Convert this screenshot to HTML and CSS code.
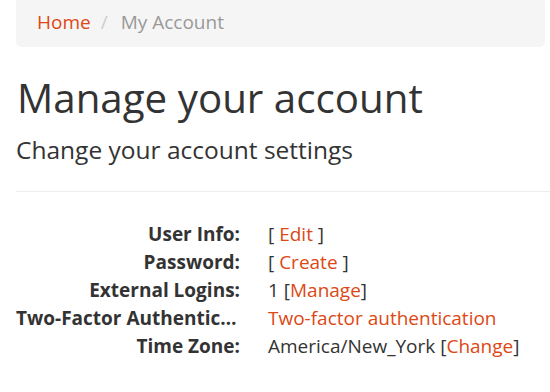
FILE: index.html
```html
<!DOCTYPE html>
<html lang="en">
<head>
    <meta charset="UTF-8">
    <meta name="viewport" content="width=device-width, initial-scale=1.0">
    <title>Manage your account</title>
    <link rel="stylesheet" href="styles.css">
</head>
<body>
    <div class="container">
        <ol class="breadcrumb">
            <li><a href="#">Home</a></li>
            <li class="active">My Account</li>
        </ol>

        <h1 class="page-title">Manage your account</h1>
        <h4 class="page-subtitle">Change your account settings</h4>

        <hr>

        <dl class="dl-horizontal">
            <dt>User Info:</dt>
            <dd>[ <a href="#">Edit</a> ]</dd>

            <dt>Password:</dt>
            <dd>[ <a href="#">Create</a> ]</dd>

            <dt>External Logins:</dt>
            <dd>1 [<a href="#">Manage</a>]</dd>

            <dt>Two-Factor Authentication:</dt>
            <dd><a href="#">Two-factor authentication</a></dd>

            <dt>Time Zone:</dt>
            <dd>America/New_York [<a href="#">Change</a>]</dd>
        </dl>
    </div>
</body>
</html>
```

FILE: styles.css
```css
* {
    margin: 0;
    padding: 0;
    box-sizing: border-box;
}

body {
    font-family: "Open Sans", "DejaVu Sans", sans-serif;
    font-size: 19px;
    line-height: 28px;
    color: #333;
    background: white;
}

a {
    color: #dd4814;
    text-decoration: none;
}

.container {
    padding: 0 0 0 16px;
    margin-top: -3px;
}

.breadcrumb {
    list-style: none;
    display: flex;
    background: #f5f5f5;
    border-radius: 5.6px;
    padding: 11.2px 21px;
    margin-right: 5px;
    margin-bottom: 28px;
}

.breadcrumb li + li::before {
    content: "/";
    color: #ccc;
    padding: 0 13px 0 10px;
}

.breadcrumb .active {
    color: #999;
}

.page-title {
    font-size: 40.3px;
    font-weight: normal;
    line-height: 45px;
    margin-bottom: 16px;
    padding-left: 1px;
}

.page-subtitle {
    font-size: 24.5px;
    font-weight: normal;
    line-height: 28px;
}

hr {
    border: 0;
    border-top: 1.4px solid #eee;
    margin: 27px 0 28px;
}

.dl-horizontal {
    display: grid;
    grid-template-columns: 224px 1fr;
    column-gap: 28px;
}

.dl-horizontal dt {
    font-weight: bold;
    text-align: right;
    white-space: nowrap;
    overflow: hidden;
    text-overflow: ellipsis;
}
```
